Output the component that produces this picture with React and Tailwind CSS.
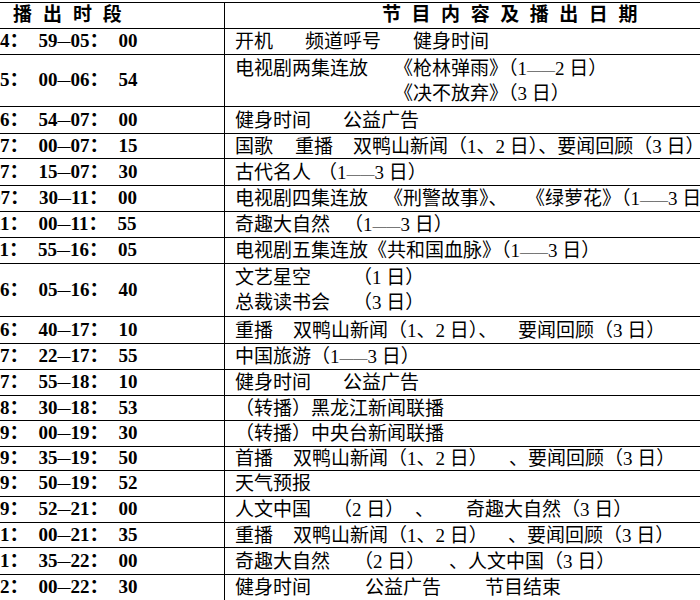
import React from 'react';

const D = () => <span className="text-[14px]">——</span>;

const S = ({ w, children }) => <span className={`inline-block ${w}`}>{children}</span>;

function Time({ t }) {
  const [a, b] = t.split('—');
  const [h1, m1] = a.split('：');
  const [h2, m2] = b.split('：');
  return (
    <span className="font-bold whitespace-nowrap">
      {h1}
      <span className="inline-block w-[29px]">：</span>
      {m1}
      <span className="text-[13px] align-[2px]">—</span>
      {h2}
      <span className="inline-block w-[29px]">：</span>
      {m2}
    </span>
  );
}

const rows = [
  {
    t: '04：59—05：00',
    h: 'h-[26px]',
    lines: [<><S w="w-[70px]">开机</S><S w="w-[108px]">频道呼号</S>健身时间</>],
  },
  {
    t: '05：00—06：54',
    h: 'h-[52px]',
    lines: [
      <><S w="w-[159px]">电视剧两集连放</S>《枪林弹雨》（1<D />2 日）</>,
      <><S w="w-[159px]"></S>《决不放弃》（3 日）</>,
    ],
  },
  {
    t: '06：54—07：00',
    h: 'h-[27px]',
    lines: [<><S w="w-[108px]">健身时间</S>公益广告</>],
  },
  {
    t: '07：00—07：15',
    h: 'h-[25px]',
    lines: [<><S w="w-[60px]">国歌</S><S w="w-[58px]">重播</S>双鸭山新闻（1、2 日）、要闻回顾（3 日）</>],
  },
  {
    t: '07：15—07：30',
    h: 'h-[27px]',
    lines: [<><S w="w-[83px]">古代名人</S>（1<D />3 日）</>],
  },
  {
    t: '07：30—11：00',
    h: 'h-[26px]',
    lines: [<><S w="w-[149px]">电视剧四集连放</S><S w="w-[142px]">《刑警故事》、</S>《绿萝花》（1<D />3 日）</>],
  },
  {
    t: '11：00—11：55',
    h: 'h-[26px]',
    lines: [<><S w="w-[109px]">奇趣大自然</S>（1<D />3 日）</>],
  },
  {
    t: '11：55—16：05',
    h: 'h-[26px]',
    lines: [<>电视剧五集连放《共和国血脉》（1<D />3 日）</>],
  },
  {
    t: '16：05—16：40',
    h: 'h-[53px]',
    lines: [
      <><S w="w-[118px]">文艺星空</S>（1 日）</>,
      <><S w="w-[118px]">总裁读书会</S>（3 日）</>,
    ],
  },
  {
    t: '16：40—17：10',
    h: 'h-[27px]',
    lines: [<><S w="w-[58px]">重播</S><S w="w-[225px]">双鸭山新闻（1、2 日）、</S>要闻回顾（3 日）</>],
  },
  {
    t: '17：22—17：55',
    h: 'h-[26px]',
    lines: [<>中国旅游（1<D />3 日）</>],
  },
  {
    t: '17：55—18：10',
    h: 'h-[26px]',
    lines: [<><S w="w-[108px]">健身时间</S>公益广告</>],
  },
  {
    t: '18：30—18：53',
    h: 'h-[25px]',
    lines: [<>（转播）黑龙江新闻联播</>],
  },
  {
    t: '19：00—19：30',
    h: 'h-[26px]',
    lines: [<>（转播）中央台新闻联播</>],
  },
  {
    t: '19：35—19：50',
    h: 'h-[24px]',
    lines: [<><S w="w-[58px]">首播</S><S w="w-[216px]">双鸭山新闻（1、2 日）</S>、要闻回顾（3 日）</>],
  },
  {
    t: '19：50—19：52',
    h: 'h-[26px]',
    lines: [<>天气预报</>],
  },
  {
    t: '19：52—21：00',
    h: 'h-[26px]',
    lines: [<><S w="w-[98px]">人文中国</S><S w="w-[82px]">（2 日）</S><S w="w-[51px]">、</S>奇趣大自然（3 日）</>],
  },
  {
    t: '21：00—21：35',
    h: 'h-[25px]',
    lines: [<><S w="w-[58px]">重播</S><S w="w-[215px]">双鸭山新闻（1、2 日）</S>、要闻回顾（3 日）</>],
  },
  {
    t: '21：35—22：00',
    h: 'h-[27px]',
    lines: [<><S w="w-[119px]">奇趣大自然</S><S w="w-[95px]">（2 日）</S>、人文中国（3 日）</>],
  },
  {
    t: '22：00—22：30',
    h: 'h-[26px]',
    lines: [<><S w="w-[130px]">健身时间</S><S w="w-[120px]">公益广告</S>节目结束</>],
  },
];

export default function App() {
  return (
    <div className="w-[700px] h-[600px] overflow-hidden bg-white text-black pt-[2px] font-[family-name:'Liberation_Serif','Noto_Sans_CJK_SC',serif] text-[19px]">
      <div className="-ml-[86px] w-[886px] border-t border-black">
        <div className="flex h-[26px] border-b border-black">
          <div className="w-[311px] shrink-0 border-r border-black pl-[99px] flex items-center font-bold tracking-[3.1px] whitespace-nowrap">
            播 出 时 段
          </div>
          <div className="flex-1 pl-[157px] flex items-center font-bold tracking-[2.9px] whitespace-nowrap">
            节 目 内 容 及 播 出 日 期
          </div>
        </div>

        {rows.map((r) => (
          <div key={r.t} className={`flex border-b border-black ${r.h}`}>
            <div className="w-[311px] shrink-0 border-r border-black pr-[10px] flex items-center justify-center">
              <Time t={r.t} />
            </div>
            <div className="flex-1 pl-[10px] flex flex-col justify-center">
              {r.lines.map((line, i) => (
                <div key={i} className="h-[25px] leading-[25px] whitespace-nowrap">
                  {line}
                </div>
              ))}
            </div>
          </div>
        ))}
      </div>
    </div>
  );
}
